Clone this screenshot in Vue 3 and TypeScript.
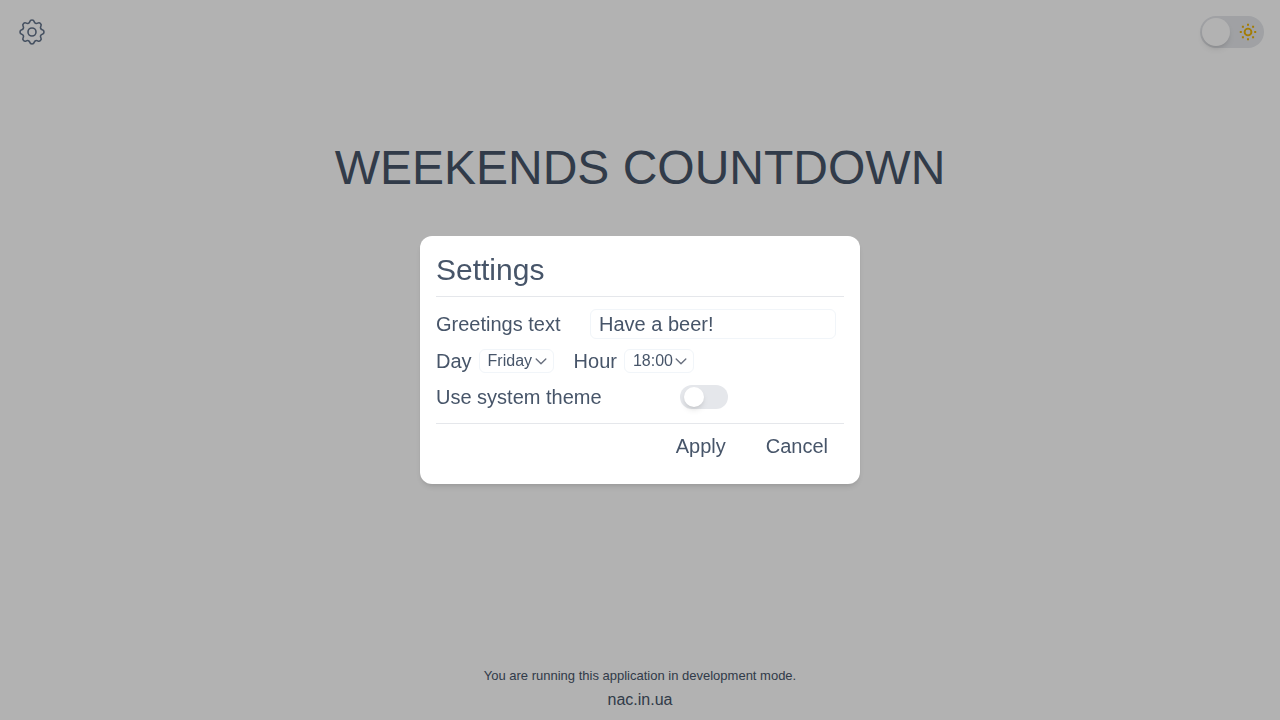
<script setup lang="ts">
import { ref } from 'vue'

const greeting = ref('Have a beer!')
const day = ref('Friday')
const hour = ref('18:00')
const darkTheme = ref(false)
const systemTheme = ref(false)
const open = ref(true)

const days = ['Monday', 'Tuesday', 'Wednesday', 'Thursday', 'Friday', 'Saturday', 'Sunday']
const hours = Array.from({ length: 24 }, (_, i) => `${String(i).padStart(2, '0')}:00`)
</script>

<template>
  <div class="page">
    <header class="topbar">
      <button class="gear" type="button" aria-label="Open settings" @click="open = true">
        <svg viewBox="0 0 24 24" fill="none" stroke="currentColor" stroke-width="1.2" stroke-linecap="round" stroke-linejoin="round">
          <path d="M10.325 4.317c.426-1.756 2.924-1.756 3.35 0a1.724 1.724 0 002.573 1.066c1.543-.94 3.31.826 2.37 2.37a1.724 1.724 0 001.065 2.572c1.756.426 1.756 2.924 0 3.35a1.724 1.724 0 00-1.066 2.573c.94 1.543-.826 3.31-2.37 2.37a1.724 1.724 0 00-2.572 1.065c-.426 1.756-2.924 1.756-3.35 0a1.724 1.724 0 00-2.573-1.066c-1.543.94-3.31-.826-2.37-2.37a1.724 1.724 0 00-1.065-2.572c-1.756-.426-1.756-2.924 0-3.35a1.724 1.724 0 001.066-2.573c-.94-1.543.826-3.31 2.37-2.37.996.608 2.296.07 2.572-1.065z" />
          <path d="M15 12a3 3 0 11-6 0 3 3 0 016 0z" />
        </svg>
      </button>
      <label class="theme">
        <input v-model="darkTheme" type="checkbox" aria-label="Dark theme" />
        <span class="knob"></span>
        <svg class="sun" viewBox="0 0 20 20" fill="none" stroke="currentColor" stroke-width="2">
          <circle cx="10" cy="10" r="3.4" stroke-width="1.9" />
          <path d="M10 1.8v2M10 16.2v2M1.8 10h2M16.2 10h2M3.9 4.8h2M14.1 4.8h2M3.9 15.2h2M14.1 15.2h2" />
        </svg>
      </label>
    </header>

    <main class="content">
      <h1>WEEKENDS COUNTDOWN</h1>
    </main>

    <footer class="footer">
      <p>You are running this application in development mode.</p>
      <a href="#">nac.in.ua</a>
    </footer>

    <div v-if="open" class="overlay">
      <form class="dialog" role="dialog" aria-labelledby="settings-title" @submit.prevent="open = false">
        <h2 id="settings-title">Settings</h2>
        <div class="fields">
          <div class="row greeting">
            <label for="greeting">Greetings text</label>
            <input id="greeting" v-model="greeting" type="text" />
          </div>
          <div class="row times">
            <div class="pair">
              <label for="day">Day</label>
              <select id="day" v-model="day" class="day">
                <option v-for="d in days" :key="d">{{ d }}</option>
              </select>
            </div>
            <div class="pair">
              <label for="hour">Hour</label>
              <select id="hour" v-model="hour" class="hour">
                <option v-for="h in hours" :key="h">{{ h }}</option>
              </select>
            </div>
          </div>
          <div class="row system">
            <label for="system">Use system theme</label>
            <input id="system" v-model="systemTheme" class="switch" type="checkbox" />
          </div>
        </div>
        <div class="actions">
          <button type="submit">Apply</button>
          <button type="button" @click="open = false">Cancel</button>
        </div>
      </form>
    </div>
  </div>
</template>

<style>
body {
  margin: 0;
}
</style>

<style scoped>
* {
  box-sizing: border-box;
}

.page {
  display: flex;
  flex-direction: column;
  min-height: 100vh;
  background: #fff;
  color: #475569;
  font-family: "Liberation Sans", Arial, sans-serif;
  font-size: 16px;
  line-height: 24px;
}

button,
input,
select {
  margin: 0;
  color: inherit;
  font-family: inherit;
}

button {
  padding: 0;
  border: 0;
  background: none;
  cursor: pointer;
}

.topbar {
  display: flex;
  align-items: center;
  justify-content: space-between;
  padding: 16px;
}

.gear,
.gear svg {
  display: block;
  width: 32px;
  height: 32px;
}

.gear {
  color: #64748b;
}

.theme {
  display: flex;
  align-items: center;
  justify-content: space-between;
  width: 64px;
  height: 32px;
  padding: 0 6px 0 2px;
  border-radius: 16px;
  background: #e5e7eb;
  cursor: pointer;
}

.theme input {
  position: absolute;
  opacity: 0;
}

.theme:has(input:checked) {
  flex-direction: row-reverse;
}

.knob {
  width: 28px;
  height: 28px;
  border-radius: 50%;
  background: #fff;
  box-shadow: 0 4px 6px -1px rgba(0, 0, 0, 0.1), 0 2px 4px -2px rgba(0, 0, 0, 0.1);
}

.sun {
  width: 20px;
  height: 20px;
  color: #eab308;
}

.content {
  flex: 1;
  padding-top: 80px;
  text-align: center;
}

h1 {
  margin: 0;
  font-size: 48px;
  font-weight: 400;
  line-height: 48px;
}

.footer {
  padding-bottom: 8px;
  text-align: center;
}

.footer p {
  margin: 0;
  font-size: 13px;
}

.footer a {
  display: inline-block;
  color: inherit;
  text-decoration: none;
}

.overlay {
  position: fixed;
  inset: 0;
  display: flex;
  align-items: center;
  justify-content: center;
  background: rgba(0, 0, 0, 0.3);
}

.dialog {
  width: 440px;
  max-width: 100%;
  padding: 16px;
  border-radius: 12px;
  background: #fff;
  box-shadow: 0 4px 6px -1px rgba(0, 0, 0, 0.1), 0 2px 4px -2px rgba(0, 0, 0, 0.1);
  font-size: 20px;
  line-height: 28px;
}

h2 {
  margin: 0;
  padding-bottom: 8px;
  font-size: 30px;
  font-weight: 400;
  line-height: 36px;
}

.fields {
  display: flex;
  flex-direction: column;
  gap: 8px;
  padding: 12px 0;
  border-top: 1px solid #e5e7eb;
  border-bottom: 1px solid #e5e7eb;
}

.row,
.pair {
  display: flex;
  align-items: center;
}

.greeting {
  justify-content: space-between;
  padding-right: 8px;
}

.greeting input {
  width: 246px;
  height: 30px;
  padding: 0 8px;
  border: 1px solid #f1f5f9;
  border-radius: 6px;
  background: #fff;
  font-size: 20px;
}

.times {
  gap: 20px;
}

.pair {
  gap: 7px;
}

select {
  height: 24px;
  padding: 0 8px 2px;
  border: 1px solid #f1f5f9;
  border-radius: 6px;
  appearance: none;
  background: #fff url("data:image/svg+xml,%3Csvg xmlns='http://www.w3.org/2000/svg' viewBox='0 0 12 12' fill='none' stroke='%236b7280' stroke-width='1.4' stroke-linecap='round' stroke-linejoin='round'%3E%3Cpath d='M1.2 4l4.8 4.8 4.8-4.8'/%3E%3C/svg%3E") no-repeat right 6px center / 12px 12px;
  font-size: 16px;
}

.day {
  width: 75px;
}

.hour {
  width: 70px;
}

.system {
  display: grid;
  grid-template-columns: 244px auto;
  justify-content: start;
}

.switch {
  display: flex;
  align-items: center;
  width: 48px;
  height: 24px;
  padding: 0 4px;
  border-radius: 12px;
  appearance: none;
  background: #e5e7eb;
  cursor: pointer;
}

.switch::before {
  content: "";
  width: 20px;
  height: 20px;
  border-radius: 50%;
  background: #fff;
  box-shadow: 0 4px 6px -1px rgba(0, 0, 0, 0.1), 0 2px 4px -2px rgba(0, 0, 0, 0.1);
}

.switch:checked {
  justify-content: flex-end;
}

.actions {
  display: flex;
  justify-content: flex-end;
  gap: 8px;
  padding: 4px 0;
}

.actions button {
  padding: 4px 16px;
  font-size: 20px;
  line-height: 28px;
}
</style>
